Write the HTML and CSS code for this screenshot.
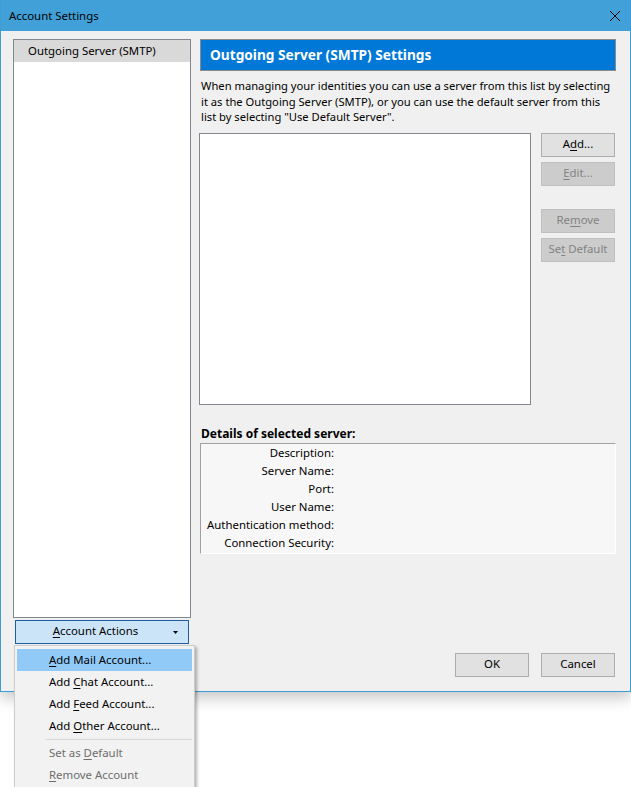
FILE: index.html
```html
<!DOCTYPE html>
<html>
<head>
<meta charset="utf-8">
<link rel="stylesheet" href="styles.css">
</head>
<body>
<div class="window">
  <div class="titlebar">
    <span class="title">Account Settings</span>
    <svg class="close" width="12" height="12" viewBox="0 0 12 12"><path d="M1 1 L11 11 M11 1 L1 11" stroke="#000" stroke-width="1" fill="none"/></svg>
  </div>
  <div class="content">
    <div class="sidebar">
      <div class="tree">
        <div class="tree-item selected">Outgoing Server (SMTP)</div>
      </div>
      <div class="actions">
        <span class="actions-label"><u>A</u>ccount Actions</span>
        <svg class="caret" width="5" height="3" viewBox="0 0 5 3"><path d="M0 0 H5 L2.5 3 Z" fill="#000"/></svg>
      </div>
    </div>
    <div class="main">
      <div class="header">Outgoing Server (SMTP) Settings</div>
      <p class="desc">When managing your identities you can use a server from this list by selecting it as the Outgoing Server (SMTP), or you can use the default server from this list by selecting "Use Default Server".</p>
      <div class="servers">
        <div class="server-list"></div>
        <div class="server-buttons">
          <div class="btn">A<u>d</u>d...</div>
          <div class="btn disabled"><u>E</u>dit...</div>
          <div class="btn disabled spaced">Re<u>m</u>ove</div>
          <div class="btn disabled">Se<u>t</u> Default</div>
        </div>
      </div>
      <div class="details-label">Details of selected server:</div>
      <div class="details">
        <div class="row"><span class="key">Description:</span><span class="val"></span></div>
        <div class="row"><span class="key">Server Name:</span><span class="val"></span></div>
        <div class="row"><span class="key">Port:</span><span class="val"></span></div>
        <div class="row"><span class="key">User Name:</span><span class="val"></span></div>
        <div class="row"><span class="key">Authentication method:</span><span class="val"></span></div>
        <div class="row"><span class="key">Connection Security:</span><span class="val"></span></div>
      </div>
      <div class="footer">
        <div class="btn">OK</div>
        <div class="btn">Cancel</div>
      </div>
    </div>
  </div>
</div>
<div class="menu">
  <div class="menu-item hover"><u>A</u>dd Mail Account...</div>
  <div class="menu-item">Add <u>C</u>hat Account...</div>
  <div class="menu-item">Add <u>F</u>eed Account...</div>
  <div class="menu-item">Add <u>O</u>ther Account...</div>
  <div class="menu-sep"></div>
  <div class="menu-item disabled">Set as <u>D</u>efault</div>
  <div class="menu-item disabled"><u>R</u>emove Account</div>
</div>
</body>
</html>
```

FILE: styles.css
```css
* { box-sizing: border-box; }
html, body { margin: 0; padding: 0; background: #fff; }
body {
  font-family: "Noto Sans", "Open Sans", sans-serif;
  font-size: 11.4px;
  color: #000;
  width: 631px;
  height: 787px;
  overflow: hidden;
  position: relative;
}
u { text-decoration-thickness: 1px; text-underline-offset: 2px; }

.window {
  width: 631px;
  height: 692px;
  border: 1px solid #3d9bd6;
  border-top: none;
  background: #f0f0f0;
  box-shadow: 0 6px 14px rgba(0,0,0,0.22);
  display: flex;
  flex-direction: column;
}
.titlebar {
  height: 31px;
  background: #41a0d8;
  display: flex;
  align-items: center;
  justify-content: space-between;
  padding: 0 9px 0 8px;
  flex: none;
}
.title { line-height: 16px; }
.close { display: block; }

.content {
  flex: 1;
  display: flex;
  align-items: flex-start;
  padding: 8px 14px 0 12px;
  gap: 8px;
}

.sidebar {
  width: 178px;
  flex: none;
  display: flex;
  flex-direction: column;
}
.tree {
  height: 579px;
  border: 1px solid #828790;
  background: #fff;
}
.tree-item {
  height: 22px;
  line-height: 21px;
  padding-left: 14px;
}
.tree-item.selected { background: #d9d9d9; }
.actions {
  margin: 2px 2px 0 2px;
  height: 24px;
  border: 1px solid #1f5fa0;
  background: #cce4f7;
  display: flex;
  align-items: center;
  padding: 0 10px 2px 2px;
}
.actions-label { flex: 1; text-align: center; line-height: 16px; }
.caret { display: block; margin-top: 2px; }

.main {
  width: 417px;
  flex: none;
  height: 638px;
  display: flex;
  flex-direction: column;
}
.header {
  margin-left: 1px;
  height: 32px;
  border: 1px solid #8a8a8a;
  background: #0078d7;
  color: #fff;
  font-weight: bold;
  font-size: 13.7px;
  line-height: 29px;
  padding-left: 9px;
}
.desc {
  margin: 7px 0 0 2px;
  line-height: 15.5px;
  font-size: 11.2px;
}
.servers {
  margin-top: 8px;
  display: flex;
  gap: 10px;
}
.server-list {
  width: 332px;
  height: 272px;
  border: 1px solid #828790;
  background: #fff;
}
.server-buttons {
  display: flex;
  flex-direction: column;
  gap: 5px;
}
.btn {
  width: 74px;
  height: 24px;
  border: 1px solid #adadad;
  background: #e1e1e1;
  text-align: center;
  line-height: 20px;
}
.btn.disabled {
  background: #cccccc;
  border-color: #bfbfbf;
  color: #838383;
}
.btn.spaced { margin-top: 18px; }

.details-label {
  margin: 21px 0 0 2px;
  font-weight: bold;
  font-size: 12px;
  line-height: 16px;
}
.details {
  margin: 1px 0 0 1px;
  height: 111px;
  background: #f7f7f7;
  border: 1px solid #fff;
  border-top-color: #a0a0a0;
  border-left-color: #a0a0a0;
}
.row {
  display: flex;
  height: 18px;
  line-height: 18px;
}
.key {
  width: 133px;
  text-align: right;
  white-space: nowrap;
}

.footer {
  margin-top: auto;
  display: flex;
  justify-content: flex-end;
  gap: 12px;
  padding-right: 1px;
}

.menu {
  position: absolute;
  left: 14px;
  top: 645px;
  width: 181px;
  height: 150px;
  background: #f2f2f2;
  border: 1px solid #cccccc;
  box-shadow: 2px 2px 3px rgba(0,0,0,0.3);
  padding: 3px 2px;
}
.menu-item {
  height: 22px;
  line-height: 21px;
  padding-left: 32px;
}
.menu-item.hover { background: #91c9f7; }
.menu-item.disabled { color: #6d6d6d; }
.menu-sep {
  margin-left: 28px;
  border-top: 1px solid #d7d7d7;
  margin-top: 2px;
  height: 3px;
}
```
